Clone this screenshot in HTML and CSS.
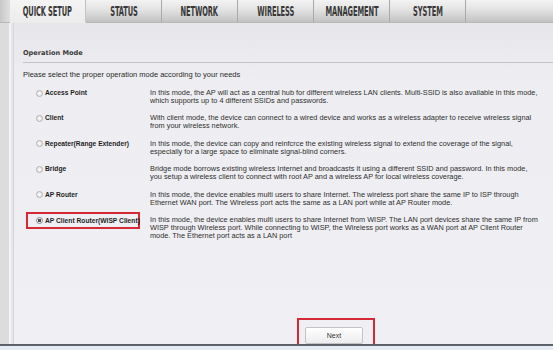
FILE: index.html
```html
<!DOCTYPE html>
<html lang="en">
<head>
  <meta charset="UTF-8" />
  <title>Quick Setup</title>
  <link rel="stylesheet" href="styles.css">
</head>
<body>

  <div class="tabs">
    <div class="tab-edge"></div>
    <div class="tab active"><span>QUICK SETUP</span></div>
    <div class="tab"><span>STATUS</span></div>
    <div class="tab"><span>NETWORK</span></div>
    <div class="tab"><span>WIRELESS</span></div>
    <div class="tab"><span>MANAGEMENT</span></div>
    <div class="tab"><span>SYSTEM</span></div>
    <div class="tab-rest"></div>
  </div>

  <div class="main">
    <div class="side"></div>
    <div class="panel">
      <div class="title">Operation Mode</div>
      <div class="intro">Please select the proper operation mode according to your needs</div>

      <div class="modes">
        <div class="mode">
          <label class="opt"><span class="radio"></span>Access Point</label>
          <p>In this mode, the AP will act as a central hub for different wireless LAN clients. Multi-SSID is also available in this mode,<br>which supports up to 4 different SSIDs and passwords.</p>
        </div>
        <div class="mode">
          <label class="opt"><span class="radio"></span>Client</label>
          <p>With client mode, the device can connect to a wired device and works as a wireless adapter to receive wireless signal<br>from your wireless network.</p>
        </div>
        <div class="mode">
          <label class="opt"><span class="radio"></span>Repeater(Range Extender)</label>
          <p>In this mode, the device can copy and reinfcrce the existing wireless signal to extend the coverage of the signal,<br>especially for a large space to eliminate signal-blind corners.</p>
        </div>
        <div class="mode">
          <label class="opt"><span class="radio"></span>Bridge</label>
          <p>Bridge mode borrows existing wireless Internet and broadcasts it using a different SSID and password. In this mode,<br>you setup a wireless client to connect with root AP and a wireless AP for local wireless coverage.</p>
        </div>
        <div class="mode">
          <label class="opt"><span class="radio"></span>AP Router</label>
          <p>In this mode, the device enables multi users to share Internet. The wireless port share the same IP to ISP through<br>Ethernet WAN port. The Wireless port acts the same as a LAN port while at AP Router mode.</p>
        </div>
        <div class="mode">
          <label class="opt marked"><span class="radio checked"></span>AP Client Router(WISP Client)</label>
          <p>In this mode, the device enables multi users to share Internet from WISP. The LAN port devices share the same IP from<br>WISP through Wireless port. While connecting to WISP, the Wireless port works as a WAN port at AP Client Router<br>mode. The Ethernet port acts as a LAN port</p>
        </div>
      </div>

      <div class="actions">
        <div class="mark-box">
          <button class="btn">Next</button>
        </div>
      </div>
    </div>
  </div>

  <div class="bottom"></div>

</body>
</html>
```

FILE: styles.css
```css
* {
  box-sizing: border-box;
}
html, body {
  margin: 0;
  padding: 0;
  width: 553px;
  height: 350px;
  overflow: hidden;
  font-family: 'Liberation Sans', Arial, sans-serif;
  color: #2a2a2a;
  background-color: #eef0f5;
}

/* Tabs */
.tabs {
  display: flex;
  height: 23px;
  background: linear-gradient(#f3f3f3, #e2e2e2 45%, #c2c2c2);
  border-bottom: 1px solid #b8b8b8;
}
.tab-edge {
  width: 10px;
  background: linear-gradient(90deg, #c8c8c8, #e0e0e0);
}
.tab {
  width: 76px;
  display: flex;
  align-items: center;
  justify-content: center;
  border-right: 1px solid #a9a9a9;
  overflow: hidden;
}
.tab span {
  display: inline-block;
  font-family: 'DejaVu Sans Condensed', 'DejaVu Sans', sans-serif;
  font-weight: bold;
  font-size: 14px;
  color: #383838;
  white-space: nowrap;
  transform: scaleX(0.53);
  letter-spacing: -0.2px;
}
.tab.active {
  background: linear-gradient(#f4f4f4, #ececec);
  border-bottom: 1px solid #ececec;
  margin-bottom: -1px;
  border-right-color: #c4c4c4;
}
.tab-rest {
  flex: 1;
}

/* Main area */
.main {
  display: flex;
  height: 321px;
}
.side {
  width: 14px;
  background: linear-gradient(90deg, #dcdcdc 0, #dcdcdc 9px, #f4f4f4 9px, #f4f4f4 11px, #e6e6e8 11px, #e6e6e8 13px, #d6d6da 13px);
}
.panel {
  flex: 1;
  display: flex;
  flex-direction: column;
  padding: 0 0 0 9px;
  background: linear-gradient(#e7e7eb, #eeeef2 60px, #f0f0f4);
}
.title {
  margin-top: 25px;
  padding-bottom: 4px;
  border-bottom: 1px solid #c4c4c8;
  font-family: 'DejaVu Sans', Verdana, sans-serif;
  font-weight: bold;
  font-size: 6.6px;
  line-height: 10px;
  color: #3a3a3a;
}
.intro {
  margin-top: 7px;
  font-size: 7.5px;
  line-height: 10px;
}

/* Mode list */
.modes {
  display: flex;
  flex-direction: column;
  gap: 9.4px;
  margin-top: 9px;
}
.mode {
  display: grid;
  grid-template-columns: 127px 1fr;
}
.opt {
  display: flex;
  align-items: flex-start;
  gap: 2px;
  padding-left: 13px;
  font-weight: bold;
  font-size: 6.7px;
  line-height: 8px;
  color: #1e1e1e;
  white-space: nowrap;
}
.opt.marked {
  margin: -4px 0 0 3px;
  padding: 3px 0 3px 8px;
  width: 114px;
  height: 17px;
  border: 2px solid #d42a36;
}
.radio {
  width: 7px;
  height: 7px;
  margin-top: 0.5px;
  border-radius: 50%;
  border: 1px solid #b4b4b8;
  background: radial-gradient(#ffffff, #d8d8dc);
  flex: none;
}
.radio.checked {
  background: radial-gradient(#4a4a58 0, #4a4a58 1.4px, #f4f4f4 1.8px, #d8d8dc);
  border-color: #8a8a94;
}
.mode p {
  margin: 0;
  font-size: 7.35px;
  line-height: 8px;
  color: #2e2e2e;
  white-space: nowrap;
}

/* Next button */
.actions {
  margin-top: auto;
  padding-left: 274px;
}
.mark-box {
  width: 78px;
  height: 26px;
  border: 2px solid #d42a36;
  border-bottom: none;
  padding: 7px 0 0 6px;
}
.btn {
  display: block;
  width: 58px;
  height: 17px;
  padding: 0;
  border: 1px solid #c4c4c8;
  border-radius: 2px;
  background: linear-gradient(#ffffff, #ececee);
  font-family: 'Liberation Sans', Arial, sans-serif;
  font-size: 7px;
  color: #333;
}

.bottom {
  height: 6px;
  border-top: 2px solid #5c616c;
  background: #e6eaf2;
}
```
